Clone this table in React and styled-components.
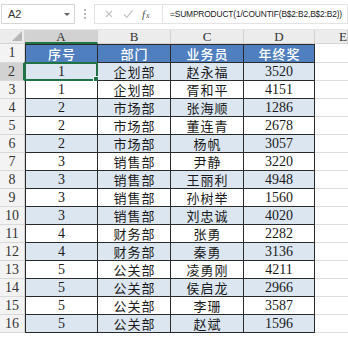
import React from 'react';
import styled, { createGlobalStyle } from 'styled-components';

const GlobalStyle = createGlobalStyle`
  html, body {
    margin: 0;
    padding: 0;
    background: #ffffff;
    overflow: hidden;
  }
  * { box-sizing: border-box; }
`;

const Page = styled.div`
  width: 348px;
  height: 337px;
  background: #ffffff;
  overflow: hidden;
  font-family: "Liberation Serif", "Noto Sans CJK SC", serif;
`;

const FormulaBar = styled.div`
  display: flex;
  align-items: center;
  height: 30px;
  padding: 3px 0 4px 1px;
  background: #ffffff;
  border-bottom: 1px solid #e6e6e6;
`;

const NameBox = styled.div`
  width: 74px;
  height: 20px;
  border: 1px solid #d6d6d6;
  display: flex;
  align-items: center;
  justify-content: space-between;
  padding: 0 4px 0 6px;
  font-family: "Liberation Sans", Arial, sans-serif;
  font-size: 11px;
  color: #333;
`;

const Caret = styled.span`
  width: 0;
  height: 0;
  border-left: 3px solid transparent;
  border-right: 3px solid transparent;
  border-top: 3px solid #666;
`;

const Grip = styled.div`
  width: 19px;
  display: flex;
  flex-direction: column;
  align-items: center;
  gap: 2px;
  span {
    width: 2px;
    height: 2px;
    background: #b8b8b8;
  }
`;

const FxBox = styled.div`
  width: 69px;
  height: 20px;
  border: 1px solid #e3e3e3;
  display: flex;
  align-items: center;
  justify-content: space-around;
  padding: 0 4px;
`;

const FormulaInput = styled.div`
  flex: 1;
  height: 20px;
  border: 1px solid #e3e3e3;
  border-left: none;
  display: flex;
  align-items: center;
  padding-left: 7px;
  font-family: "Liberation Sans", Arial, sans-serif;
  font-size: 8.4px;
  letter-spacing: -0.15px;
  color: #222;
  white-space: nowrap;
  overflow: hidden;
`;

const Sheet = styled.div`
  display: grid;
  grid-template-columns: 25px 73px 73px 73px 71px 1fr;
  grid-template-rows: 14px 19px repeat(15, 18px);
`;

const Corner = styled.div`
  background: #ececec;
  border-right: 1px solid #d4d4d4;
  border-bottom: 1px solid #d4d4d4;
  position: relative;
  &::after {
    content: '';
    position: absolute;
    right: 2px;
    bottom: 2px;
    border-left: 10px solid transparent;
    border-bottom: 10px solid #b7b7b7;
  }
`;

const ColHead = styled.div`
  background: ${({ $active }) => ($active ? '#d2d2d2' : '#ececec')};
  border-right: 1px solid #d0d0d0;
  border-bottom: ${({ $active }) => ($active ? '2px solid #217346' : '1px solid #d4d4d4')};
  display: flex;
  align-items: center;
  justify-content: ${({ $edge }) => ($edge ? 'flex-end' : 'center')};
  font-size: 13px;
  line-height: 1;
  color: #333;
  overflow: hidden;
  white-space: nowrap;
`;

const RowHead = styled.div`
  background: ${({ $active }) => ($active ? '#d2d2d2' : '#f3f3f3')};
  border-right: ${({ $active }) => ($active ? '2px solid #217346' : '1px solid #d4d4d4')};
  border-bottom: 1px solid #d9d9d9;
  display: flex;
  align-items: center;
  justify-content: center;
  font-size: 14px;
  color: #333;
`;

const Cell = styled.div`
  position: relative;
  display: flex;
  align-items: center;
  justify-content: center;
  font-size: 14px;
  line-height: 1;
  color: ${({ $head }) => ($head ? '#ffffff' : '#1a1a1a')};
  background: ${({ $head, $band }) => ($head ? '#4f7fbe' : $band ? '#dce6f1' : '#ffffff')};
  border-right: 1px solid #2b2b2b;
  border-bottom: 1px solid #2b2b2b;
  border-left: ${({ $first }) => ($first ? '1px solid #2b2b2b' : 'none')};
  border-top: ${({ $top }) => ($top ? '1px solid #2b2b2b' : 'none')};
  font-family: "Liberation Serif", "Noto Sans CJK SC", serif;
`;

const CjkText = styled.span`
  display: block;
  font-family: "Noto Sans CJK SC", sans-serif;
  font-weight: ${({ $head }) => ($head ? 500 : 400)};
  font-size: 13px;
  line-height: 13px;
  letter-spacing: 1px;
  margin-right: -1px;
`;

const Empty = styled.div`
  background: #ffffff;
  border-bottom: 1px solid #dedede;
`;

const Active = styled.div`
  position: absolute;
  inset: -1px -1px -1px -2px;
  border: 2px solid #217346;
  pointer-events: none;
  &::after {
    content: '';
    position: absolute;
    right: -4px;
    bottom: -4px;
    width: 5px;
    height: 5px;
    background: #217346;
    border: 1px solid #ffffff;
  }
`;

const rows = [
  [1, '企划部', '赵永福', 3520],
  [1, '企划部', '胥和平', 4151],
  [2, '市场部', '张海顺', 1286],
  [2, '市场部', '董连青', 2678],
  [2, '市场部', '杨帆', 3057],
  [3, '销售部', '尹静', 3220],
  [3, '销售部', '王丽利', 4948],
  [3, '销售部', '孙树举', 1560],
  [3, '销售部', '刘忠诚', 4020],
  [4, '财务部', '张勇', 2282],
  [4, '财务部', '秦勇', 3136],
  [5, '公关部', '凌勇刚', 4211],
  [5, '公关部', '侯启龙', 2966],
  [5, '公关部', '李珊', 3587],
  [5, '公关部', '赵斌', 1596],
];

const Icon = ({ children }) => (
  <svg width="12" height="12" viewBox="0 0 12 12" fill="none">
    {children}
  </svg>
);

const App = () => (
  <Page>
    <GlobalStyle />
    <FormulaBar>
      <NameBox>
        A2
        <Caret />
      </NameBox>
      <Grip>
        <span />
        <span />
        <span />
      </Grip>
      <FxBox>
        <Icon>
          <path d="M3 3l6 6M9 3l-6 6" stroke="#c4c4c4" strokeWidth="1.2" />
        </Icon>
        <Icon>
          <path d="M2 6.5l2.8 2.8L10.5 2.5" stroke="#c4c4c4" strokeWidth="1.2" />
        </Icon>
        <svg width="14" height="12" viewBox="0 0 14 12">
          <text x="1" y="10" fontFamily="Liberation Serif, serif" fontStyle="italic" fontSize="11" fill="#555">
            f
          </text>
          <text x="5" y="10" fontFamily="Liberation Serif, serif" fontStyle="italic" fontSize="8" fill="#555">
            x
          </text>
        </svg>
      </FxBox>
      <FormulaInput>=SUMPRODUCT(1/COUNTIF(B$2:B2,B$2:B2))</FormulaInput>
    </FormulaBar>
    <Sheet>
      <Corner />
      <ColHead $active>A</ColHead>
      <ColHead>B</ColHead>
      <ColHead>C</ColHead>
      <ColHead>D</ColHead>
      <ColHead $edge>E</ColHead>

      <RowHead>1</RowHead>
      <Cell $head $first $top>
        <CjkText $head>序号</CjkText>
      </Cell>
      <Cell $head $top>
        <CjkText $head>部门</CjkText>
      </Cell>
      <Cell $head $top>
        <CjkText $head>业务员</CjkText>
      </Cell>
      <Cell $head $top>
        <CjkText $head>年终奖</CjkText>
      </Cell>
      <Empty />

      {rows.map(([no, dept, name, bonus], i) => {
        const band = i % 2 === 0;
        return (
          <React.Fragment key={i}>
            <RowHead $active={i === 0}>{i + 2}</RowHead>
            <Cell $band={band} $first>
              {no}
              {i === 0 && <Active />}
            </Cell>
            <Cell $band={band}>
              <CjkText>{dept}</CjkText>
            </Cell>
            <Cell $band={band}>
              <CjkText>{name}</CjkText>
            </Cell>
            <Cell $band={band}>{bonus}</Cell>
            <Empty />
          </React.Fragment>
        );
      })}
    </Sheet>
  </Page>
);

export default App;
